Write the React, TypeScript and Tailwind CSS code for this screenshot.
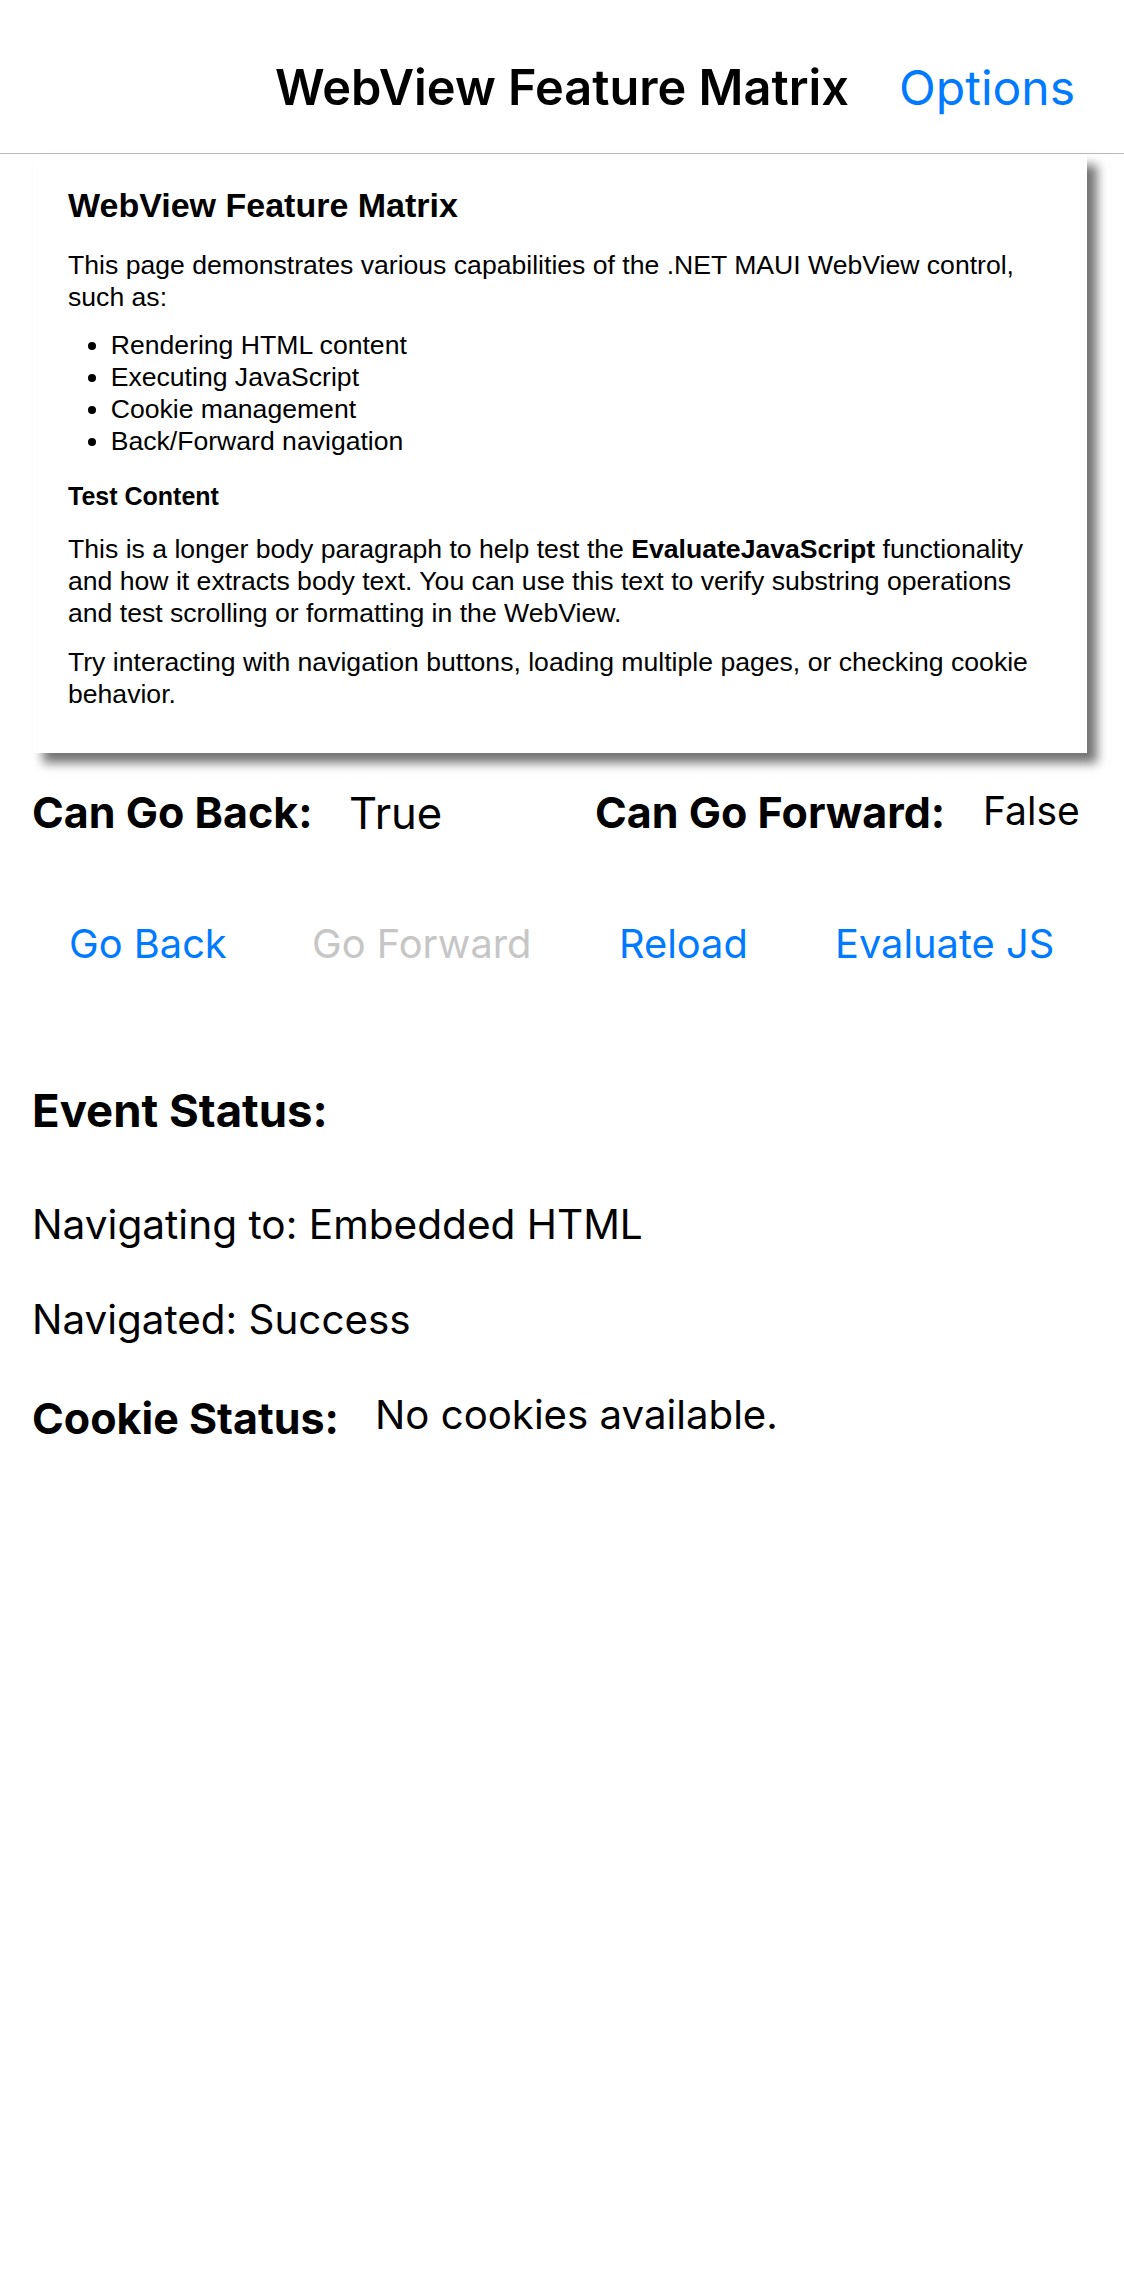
import React from "react";

export default function App() {
  return (
    <div className="min-h-[2286px] w-[1124px] bg-white font-['Inter','Noto_Sans',sans-serif] text-black">
      {/* Navigation bar */}
      <div className="grid h-[154px] grid-cols-[1fr_auto_1fr] items-center border-b border-[#b9b9b9] pt-[22px]">
        <div />
        <div className="text-[48.7px] font-semibold leading-[60px]">WebView Feature Matrix</div>
        <div className="flex justify-end pr-[49px]">
          <span className="text-[48px] leading-[60px] text-[#007aff]">Options</span>
        </div>
      </div>

      {/* WebView */}
      <div className="ml-[33px] mt-[1px] w-[1054px] bg-white px-[35px] pb-[43px] pt-[30px] font-['Liberation_Sans',Arial,sans-serif] text-black shadow-[10px_10px_10px_rgba(0,0,0,0.55)]">
        <h2 className="text-[34px] font-bold leading-[41px]">WebView Feature Matrix</h2>
        <p className="mt-[23px] text-[26.6px] leading-[32px]">
          This page demonstrates various capabilities of the .NET MAUI WebView control,
          <br />
          such as:
        </p>
        <ul className="mt-[16px] list-disc pl-[42.7px] text-[26.6px] leading-[32px]">
          <li>Rendering HTML content</li>
          <li>Executing JavaScript</li>
          <li>Cookie management</li>
          <li>Back/Forward navigation</li>
        </ul>
        <h3 className="mt-[24px] text-[25px] font-bold leading-[30px]">Test Content</h3>
        <p className="mt-[22px] text-[26.6px] leading-[32px]">
          This is a longer body paragraph to help test the <b>EvaluateJavaScript</b> functionality
          <br />
          and how it extracts body text. You can use this text to verify substring operations
          <br />
          and test scrolling or formatting in the WebView.
        </p>
        <p className="mt-[17px] text-[26.6px] leading-[32px]">
          Try interacting with navigation buttons, loading multiple pages, or checking cookie
          <br />
          behavior.
        </p>
      </div>

      {/* Can go back / forward */}
      <div className="mt-[29px] grid h-[60px] grid-cols-[317px_246px_388px_1fr] items-center pl-[32px]">
        <span className="text-[43px] font-bold leading-[54px]">Can Go Back:</span>
        <span className="pt-[4px] text-[43.6px] leading-[54px]">True</span>
        <span className="text-[43px] font-bold leading-[54px]">Can Go Forward:</span>
        <span className="pb-[3px] text-[39px] leading-[50px]">False</span>
      </div>

      {/* Buttons */}
      <div className="mt-[72px] grid h-[60px] grid-cols-[243px_307px_216px_1fr] items-center pl-[69px] text-[39.8px] leading-[50px]">
        <span className="text-[#007aff]">Go Back</span>
        <span className="text-[#c6c6c6]">Go Forward</span>
        <span className="text-[#007aff]">Reload</span>
        <span className="text-[#007aff]">Evaluate JS</span>
      </div>

      {/* Event status */}
      <div className="mt-[107px] flex h-[60px] items-center pl-[32px]">
        <span className="text-[45.5px] font-bold leading-[56px]">Event Status:</span>
      </div>
      <div className="mt-[54px] flex h-[60px] items-center pl-[32px]">
        <span className="text-[40.6px] leading-[50px]">Navigating to: Embedded HTML</span>
      </div>
      <div className="mt-[35px] flex h-[60px] items-center pl-[32px]">
        <span className="text-[40.4px] leading-[50px]">Navigated: Success</span>
      </div>
      <div className="mt-[38px] grid h-[60px] grid-cols-[343px_1fr] items-center pl-[32px]">
        <span className="text-[43px] font-bold leading-[54px]">Cookie Status:</span>
        <span className="pb-[6px] text-[40.2px] leading-[50px]">No cookies available.</span>
      </div>
    </div>
  );
}
